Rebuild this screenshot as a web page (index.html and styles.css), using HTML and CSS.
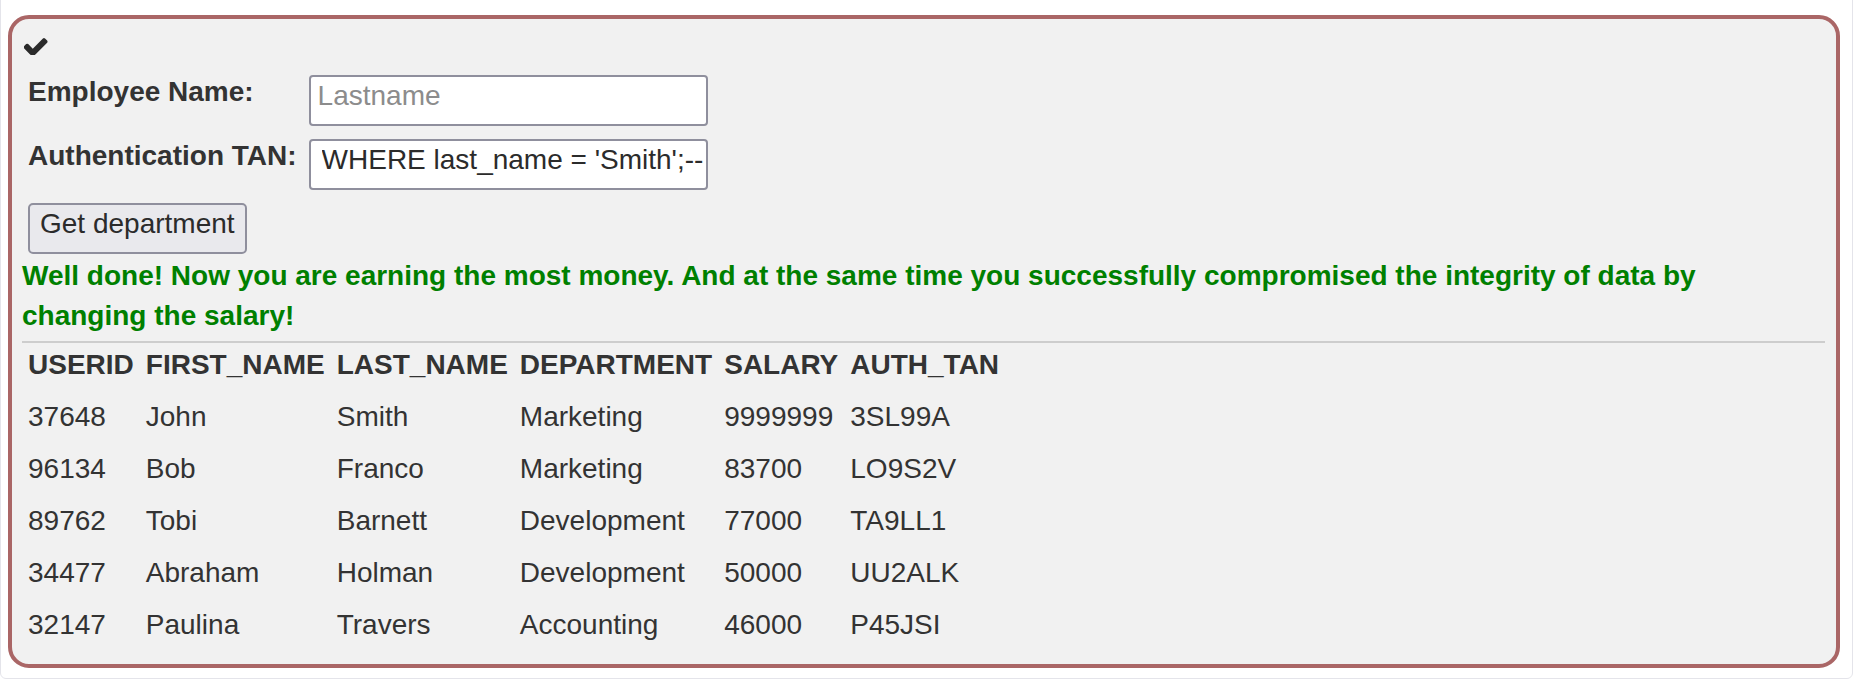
FILE: index.html
```html
<!DOCTYPE html>
<html lang="en">
<head>
<meta charset="utf-8">
<title>SQL Injection</title>
<link rel="stylesheet" href="styles.css">
</head>
<body>
<div class="page">
  <div class="attack-container">
    <div class="assignment-status">
      <svg class="check-icon" viewBox="149 266 1550 1188" width="24" height="18.4" aria-hidden="true"><path d="M1671 566q0 40-28 68l-724 724-136 136q-28 28-68 28t-68-28l-136-136-362-362q-28-28-28-68t28-68l136-136q28-28 68-28t68 28l294 295 656-657q28-28 68-28t68 28l136 136q28 28 28 68z"/></svg>
    </div>
    <form class="attack-form">
      <table class="form-table">
        <tr>
          <td><label class="field-label">Employee Name:</label></td>
          <td><input class="field" type="text" placeholder="Lastname"></td>
        </tr>
        <tr>
          <td><label class="field-label">Authentication TAN:</label></td>
          <td><input class="field field-scrolled" type="text" value="WHERE last_name = 'Smith';--"></td>
        </tr>
        <tr>
          <td class="button-cell"><button class="submit-btn" type="button">Get department</button></td>
          <td class="button-cell"></td>
        </tr>
      </table>
    </form>
    <div class="attack-feedback">
      <p class="feedback-text">Well done! Now you are earning the most money. And at the same time you successfully compromised the integrity of data by<br>changing the salary!</p>
      <hr class="divider">
      <table class="result-table">
        <tr><th>USERID</th><th>FIRST_NAME</th><th>LAST_NAME</th><th>DEPARTMENT</th><th>SALARY</th><th>AUTH_TAN</th></tr>
        <tr><td>37648</td><td>John</td><td>Smith</td><td>Marketing</td><td>9999999</td><td>3SL99A</td></tr>
        <tr><td>96134</td><td>Bob</td><td>Franco</td><td>Marketing</td><td>83700</td><td>LO9S2V</td></tr>
        <tr><td>89762</td><td>Tobi</td><td>Barnett</td><td>Development</td><td>77000</td><td>TA9LL1</td></tr>
        <tr><td>34477</td><td>Abraham</td><td>Holman</td><td>Development</td><td>50000</td><td>UU2ALK</td></tr>
        <tr><td>32147</td><td>Paulina</td><td>Travers</td><td>Accounting</td><td>46000</td><td>P45JSI</td></tr>
      </table>
    </div>
  </div>
</div>
</body>
</html>
```
FILE: styles.css
```css
html, body {
  margin: 0;
  padding: 0;
  background: #ffffff;
}

body {
  font-family: "Liberation Sans", Arial, Helvetica, sans-serif;
  font-size: 28px;
  line-height: 40px;
  color: #333333;
  overflow: hidden;
}

.page {
  margin-top: -10px;
  border: 1px solid #e4e4ea;
  border-radius: 6px;
  padding: 24px 12px 10px 7px;
}

.attack-container {
  border: 4px solid #aa6666;
  border-radius: 21px;
  background: #f1f1f1;
  padding: 10px 11px 9px 10px;
}

.assignment-status {
  box-sizing: border-box;
  height: 44px;
  padding: 8px 0 0 2px;
}

.check-icon {
  display: block;
  fill: #2b2b2b;
}

.attack-form {
  margin: 0;
}

.form-table,
.result-table {
  border-collapse: collapse;
  border-spacing: 0;
}

.form-table td {
  padding: 2px 6px 11px;
  vertical-align: top;
}

.form-table td.button-cell {
  padding-bottom: 2px;
}

.field-label {
  display: block;
  font-weight: bold;
  line-height: 34.6px;
  white-space: nowrap;
}

.field {
  box-sizing: border-box;
  width: 399px;
  height: 51px;
  margin: 0;
  border: 2px solid #8f8f9d;
  border-radius: 4px;
  background: #ffffff;
  padding: 3px 2px 12px 7px;
  font-family: inherit;
  font-size: 28px;
  line-height: 32px;
  color: #2b2b2b;
  outline: none;
}

.field::placeholder {
  color: #8c8c8c;
  opacity: 1;
}

.field-scrolled {
  padding-left: 11px;
}

.submit-btn {
  box-sizing: border-box;
  height: 51px;
  margin: 0;
  border: 2px solid #8f8f9d;
  border-radius: 5px;
  background: #e9e9ed;
  padding: 3px 10px 12px 10px;
  font-family: inherit;
  font-size: 28px;
  line-height: 32px;
  color: #2b2b2b;
  white-space: nowrap;
}

.feedback-text {
  margin: 0;
  font-weight: bold;
  color: #008000;
}

.divider {
  margin: 5px 0 0;
  height: 0;
  border: 0;
  border-top: 2px solid #cdcdcd;
}

.result-table th,
.result-table td {
  text-align: left;
  white-space: nowrap;
  padding: 2px 6px 10px;
}

.result-table th {
  font-weight: bold;
}
```
